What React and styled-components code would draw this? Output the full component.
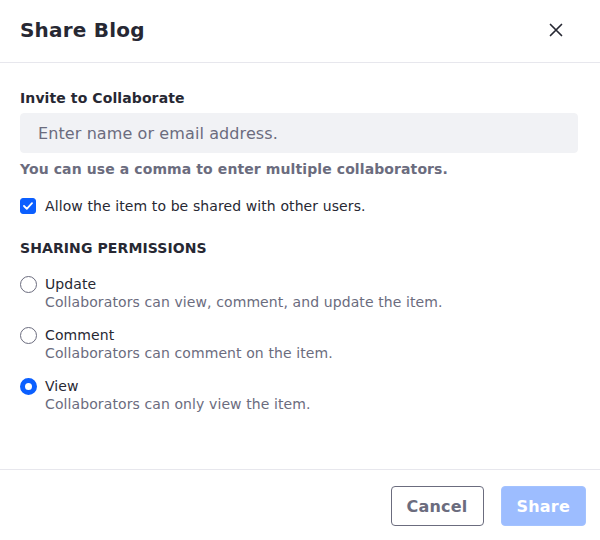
import React, { useState } from 'react';
import styled, { createGlobalStyle } from 'styled-components';

const GlobalStyle = createGlobalStyle`
  html, body {
    margin: 0;
    padding: 0;
    background: #fff;
  }
  body {
    font-family: "DejaVu Sans", "Liberation Sans", sans-serif;
    color: #272833;
    letter-spacing: 0.1px;
  }
  * {
    box-sizing: border-box;
  }
`;

const Modal = styled.div`
  width: 600px;
  height: 540px;
  display: flex;
  flex-direction: column;
  background: #fff;
`;

const Header = styled.div`
  height: 63px;
  display: flex;
  align-items: center;
  justify-content: space-between;
  padding: 0 28px 2px 20px;
  border-bottom: 1px solid #e7e7ed;
`;

const Title = styled.h2`
  margin: 0;
  font-size: 20px;
  font-weight: bold;
  letter-spacing: 0.2px;
  color: #272833;
`;

const CloseButton = styled.button`
  width: 32px;
  height: 32px;
  border: 0;
  background: transparent;
  display: flex;
  align-items: center;
  justify-content: center;
  padding: 0;
  color: #272833;
  cursor: pointer;
`;

const Body = styled.div`
  flex: 1;
  padding: 27px 22px 20px 20px;
`;

const Label = styled.label`
  display: block;
  font-size: 14px;
  font-weight: bold;
  color: #272833;
  margin-bottom: 7px;
`;

const Input = styled.input`
  display: block;
  width: 100%;
  height: 40px;
  border: 1px solid #f1f2f5;
  border-radius: 4px;
  background: #f1f2f5;
  padding: 0 17px;
  font-family: inherit;
  font-size: 16px;
  letter-spacing: 0.1px;
  color: #272833;
  outline: none;

  &::placeholder {
    color: #6b6c7e;
  }
`;

const Help = styled.div`
  margin-top: 8px;
  font-size: 14px;
  font-weight: bold;
  color: #6b6c7e;
`;

const CheckRow = styled.label`
  display: flex;
  align-items: center;
  gap: 9px;
  margin-top: 21px;
  font-size: 14px;
  color: #272833;
`;

const CheckBox = styled.span`
  width: 16px;
  height: 16px;
  border-radius: 3px;
  background: ${p => (p.checked ? '#0b5fff' : '#fff')};
  border: 1px solid ${p => (p.checked ? '#0b5fff' : '#6b6c7e')};
  display: flex;
  align-items: center;
  justify-content: center;
  flex-shrink: 0;
`;

const SectionTitle = styled.div`
  margin-top: 26px;
  font-size: 14px;
  font-weight: bold;
  text-transform: uppercase;
  color: #272833;
  letter-spacing: 0.1px;
`;

const RadioList = styled.div`
  margin-top: 19px;
  display: flex;
  flex-direction: column;
  gap: 15px;
`;

const RadioRow = styled.label`
  display: flex;
  align-items: flex-start;
  gap: 8px;
  cursor: pointer;
`;

const RadioDot = styled.span`
  width: 17px;
  height: 17px;
  margin-top: 1px;
  border-radius: 50%;
  flex-shrink: 0;
  background: #fff;
  border: ${p => (p.checked ? '5px solid #0b5fff' : '1px solid #6b6c7e')};
`;

const RadioText = styled.div`
  display: flex;
  flex-direction: column;
`;

const RadioName = styled.span`
  font-size: 14px;
  line-height: 18px;
  color: #272833;
`;

const RadioDesc = styled.span`
  font-size: 14px;
  line-height: 18px;
  color: #6b6c7e;
`;

const Footer = styled.div`
  height: 71px;
  border-top: 1px solid #e7e7ed;
  display: flex;
  align-items: center;
  justify-content: flex-end;
  gap: 17px;
  padding: 2px 14px 0 20px;
`;

const Button = styled.button`
  height: 40px;
  padding: 0 15px;
  border-radius: 4px;
  font-family: inherit;
  font-size: 16px;
  font-weight: bold;
  letter-spacing: 0.2px;
  border: 1px solid ${p => (p.primary ? '#a3c2ff' : '#6b6c7e')};
  background: ${p => (p.primary ? '#9dbdff' : '#fff')};
  color: ${p => (p.primary ? '#fff' : '#6b6c7e')};
  cursor: ${p => (p.disabled ? 'default' : 'pointer')};
`;

const permissions = [
  { id: 'update', name: 'Update', desc: 'Collaborators can view, comment, and update the item.' },
  { id: 'comment', name: 'Comment', desc: 'Collaborators can comment on the item.' },
  { id: 'view', name: 'View', desc: 'Collaborators can only view the item.' },
];

export default function App() {
  const [perm, setPerm] = useState('view');
  const [allow, setAllow] = useState(true);

  return (
    <>
      <GlobalStyle />
      <Modal>
        <Header>
          <Title>Share Blog</Title>
          <CloseButton aria-label="Close">
            <svg width="14" height="14" viewBox="0 0 14 14" fill="none">
              <path d="M1.5 1.5L12.5 12.5M12.5 1.5L1.5 12.5" stroke="#272833" strokeWidth="1.7" strokeLinecap="round" />
            </svg>
          </CloseButton>
        </Header>
        <Body>
          <Label htmlFor="collab">Invite to Collaborate</Label>
          <Input id="collab" placeholder="Enter name or email address." />
          <Help>You can use a comma to enter multiple collaborators.</Help>
          <CheckRow onClick={() => setAllow(!allow)}>
            <CheckBox checked={allow}>
              {allow && (
                <svg width="10" height="8" viewBox="0 0 10 8" fill="none">
                  <path d="M1 4L3.8 6.8L9 1.2" stroke="#fff" strokeWidth="1.8" strokeLinecap="round" strokeLinejoin="round" />
                </svg>
              )}
            </CheckBox>
            Allow the item to be shared with other users.
          </CheckRow>
          <SectionTitle>Sharing Permissions</SectionTitle>
          <RadioList>
            {permissions.map(p => (
              <RadioRow key={p.id} onClick={() => setPerm(p.id)}>
                <RadioDot checked={perm === p.id} />
                <RadioText>
                  <RadioName>{p.name}</RadioName>
                  <RadioDesc>{p.desc}</RadioDesc>
                </RadioText>
              </RadioRow>
            ))}
          </RadioList>
        </Body>
        <Footer>
          <Button>Cancel</Button>
          <Button primary disabled>Share</Button>
        </Footer>
      </Modal>
    </>
  );
}
